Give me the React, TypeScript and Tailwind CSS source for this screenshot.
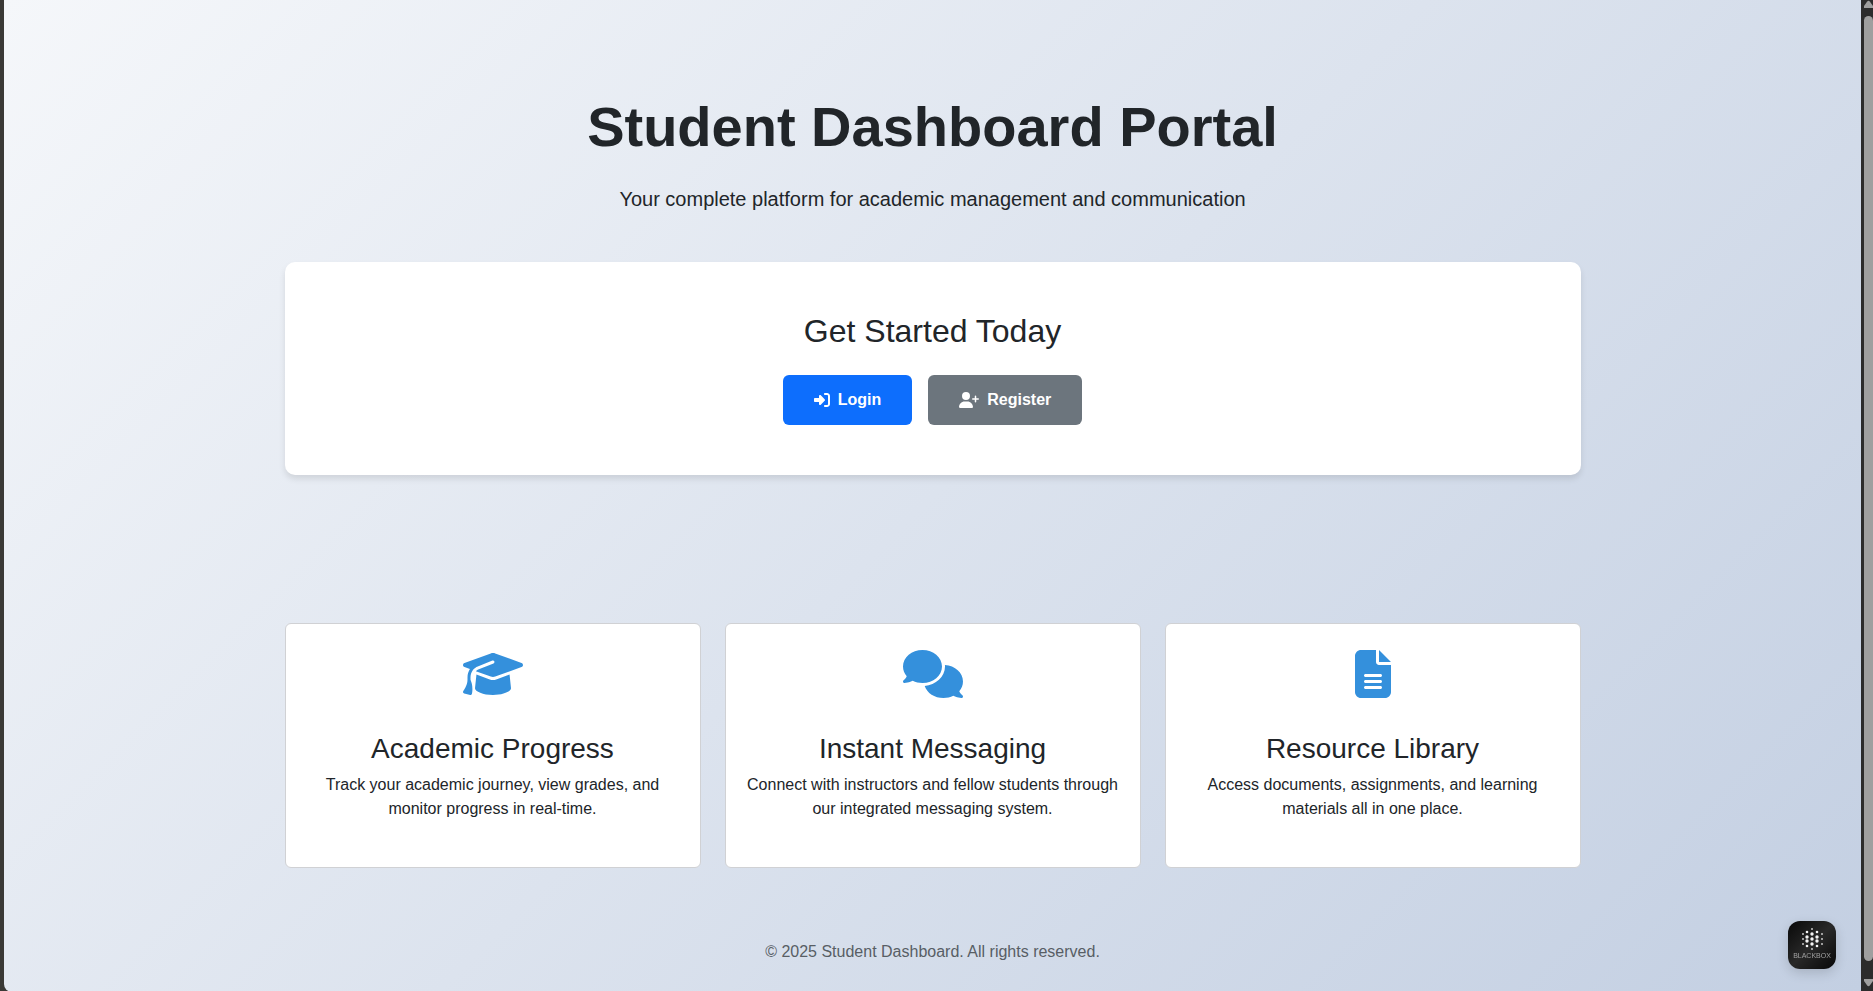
import type { IconType } from "react-icons";
import {
  FaComments,
  FaFileLines,
  FaGraduationCap,
  FaRightToBracket,
  FaUserPlus,
} from "react-icons/fa6";

interface Feature {
  icon: IconType;
  title: string;
  text: string;
}

const features: Feature[] = [
  {
    icon: FaGraduationCap,
    title: "Academic Progress",
    text: "Track your academic journey, view grades, and monitor progress in real-time.",
  },
  {
    icon: FaComments,
    title: "Instant Messaging",
    text: "Connect with instructors and fellow students through our integrated messaging system.",
  },
  {
    icon: FaFileLines,
    title: "Resource Library",
    text: "Access documents, assignments, and learning materials all in one place.",
  },
];

function FeatureCard({ icon: Icon, title, text }: Feature) {
  return (
    <article className="flex flex-col items-center rounded-md border border-[#d0d1d4] bg-white px-4 pt-[26px] pb-[46px] text-center">
      <Icon className="mb-8 h-12 w-15 text-[#3490dc]" aria-hidden="true" />
      <h3 className="mb-[5px] text-[28px] leading-[38px]">{title}</h3>
      <p className="text-base">{text}</p>
    </article>
  );
}

const dotColumns = [
  { x: 15, ys: [13, 18, 23] },
  { x: 19, ys: [11, 16, 20, 25] },
  { x: 24, ys: [8, 13, 18, 23, 28] },
  { x: 29, ys: [11, 16, 20, 25] },
  { x: 34, ys: [13, 18, 23] },
];

function AssistantButton() {
  return (
    <button
      type="button"
      className="fixed right-[37px] bottom-[22px] flex size-12 flex-col items-center rounded-xl bg-linear-to-br from-[#090909] via-[#292929] to-[#080808] shadow-[0_4px_12px_rgba(0,0,0,0.15)]"
    >
      <svg viewBox="0 0 48 31" className="h-[31px] w-12" fill="#ffffff" aria-hidden="true">
        {dotColumns.map(({ x, ys }) =>
          ys.map((y) => {
            const distance = Math.hypot(x - 24, y - 18);
            return <circle key={`${x}-${y}`} cx={x} cy={y} r={distance < 6 ? 1.7 : distance < 9 ? 1.3 : 1} opacity={distance < 9 ? 0.95 : 0.75} />;
          }),
        )}
      </svg>
      <span className="text-[7px] leading-2 text-[#a0a0a0]">BLACKBOX</span>
    </button>
  );
}

function ScrollRail() {
  return (
    <div className="flex w-3 shrink-0 flex-col items-end bg-[#2c2c2c]" aria-hidden="true">
      <svg viewBox="0 0 9 16" className="h-4 w-[9px]" fill="#9f9f9f">
        <path d="M3.2 1.6Q4.5 0 5.8 1.6L9 6V8H0V6Z" />
      </svg>
      <div className="w-[9px] flex-1 rounded-full bg-[#9f9f9f]" />
      <svg viewBox="0 0 9 31" className="h-[31px] w-[9px]" fill="#9f9f9f">
        <path d="M0 18H9V20L5.8 24.4Q4.5 26 3.2 24.4L0 20Z" />
      </svg>
    </div>
  );
}

export default function App() {
  return (
    <div className="flex min-h-screen bg-[#3a3936] pl-1 font-['Liberation_Sans',Arial,sans-serif] text-[#212529]">
      <div className="flex flex-1 flex-col rounded-bl-lg bg-linear-[135deg,#f5f7fa_0%,#c3cfe2_100%]">
        <main className="mx-auto w-full max-w-[1320px] px-3 pt-[93px]">
          <header className="mb-12 text-center">
            <h1 className="mb-6 text-[56px] leading-[67px] font-bold">Student Dashboard Portal</h1>
            <p className="text-xl leading-[30px]">
              Your complete platform for academic management and communication
            </p>
          </header>

          <section className="rounded-[10px] bg-white p-[50px] text-center shadow-[0_4px_6px_rgba(0,0,0,0.1)]">
            <h2 className="mb-[25px] text-[32px] leading-[38px]">Get Started Today</h2>
            <div className="flex justify-center gap-4">
              <a
                href="#login"
                className="flex items-center gap-2 rounded-md bg-[#0d6efd] px-[31px] py-[13px] font-bold text-white"
              >
                <FaRightToBracket className="size-4" aria-hidden="true" />
                Login
              </a>
              <a
                href="#register"
                className="flex items-center gap-2 rounded-md bg-[#6c757d] px-[31px] py-[13px] font-bold text-white"
              >
                <FaUserPlus className="h-4 w-5" aria-hidden="true" />
                Register
              </a>
            </div>
          </section>

          <section className="mt-[148px] grid grid-cols-3 gap-6">
            {features.map((feature) => (
              <FeatureCard key={feature.title} {...feature} />
            ))}
          </section>
        </main>

        <footer className="mt-[72px] pb-7 text-center text-base text-[#585e65]">
          © 2025 Student Dashboard. All rights reserved.
        </footer>
      </div>
      <ScrollRail />
      <AssistantButton />
    </div>
  );
}
